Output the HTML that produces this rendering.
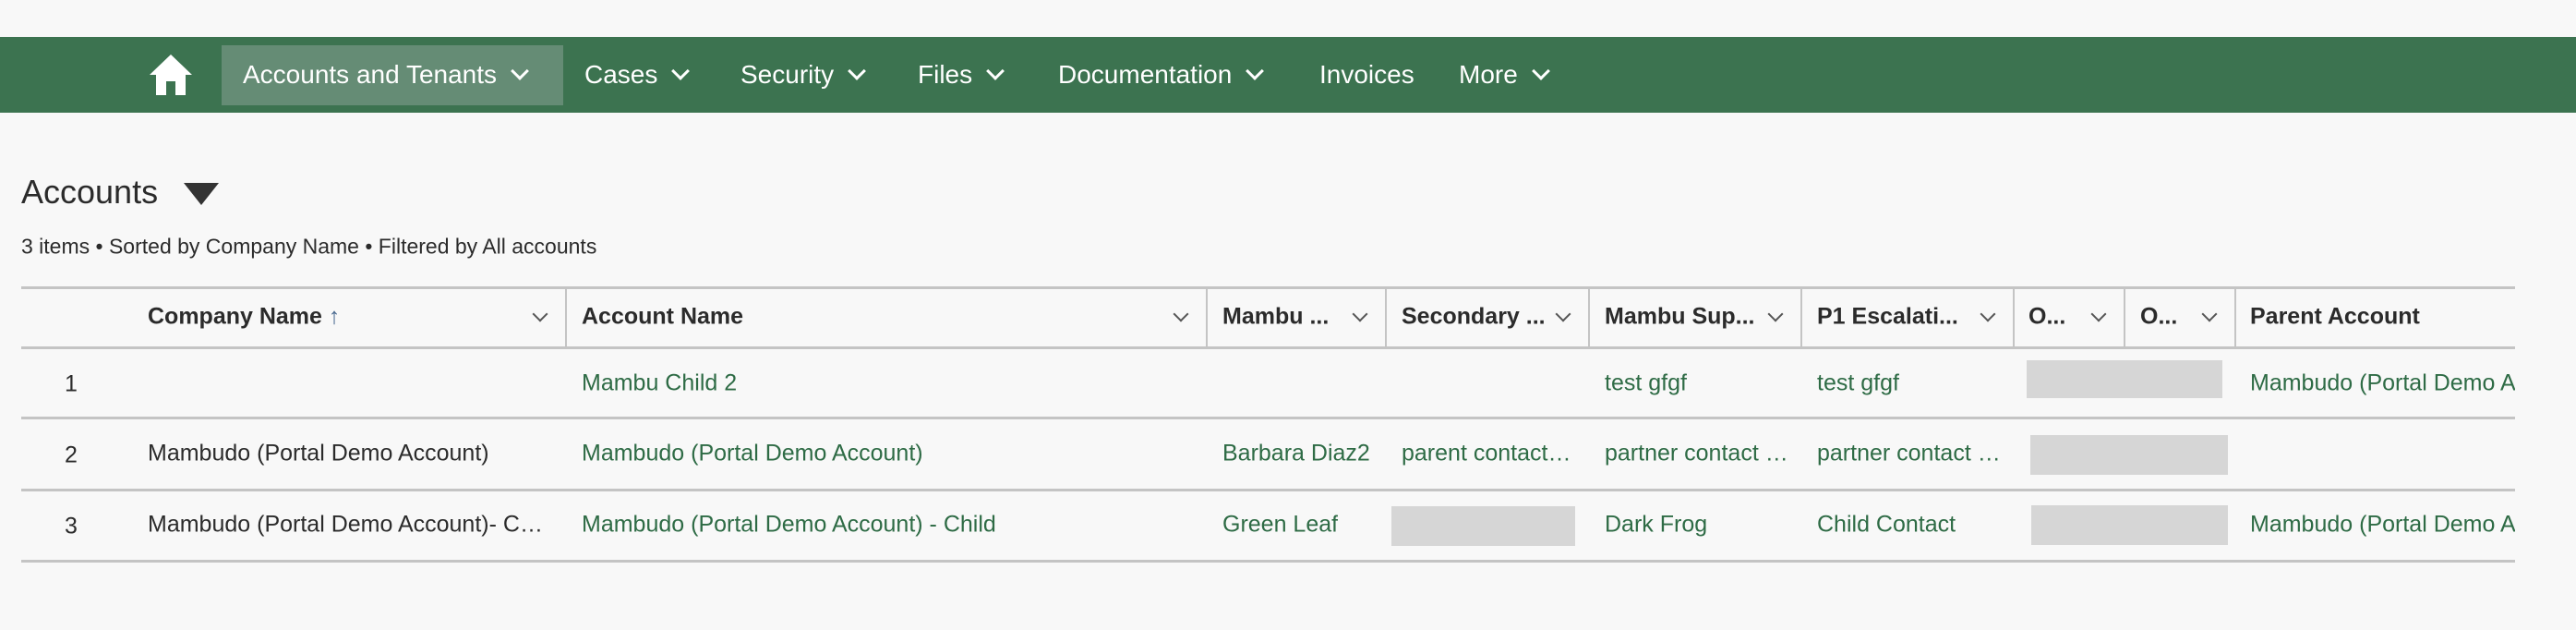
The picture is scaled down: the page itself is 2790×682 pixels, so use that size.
<!DOCTYPE html>
<html><head><meta charset="utf-8"><style>
*{margin:0;padding:0;box-sizing:border-box}
body{width:2790px;height:682px;background:#f8f8f8;font-family:"Liberation Sans",Arial,sans-serif;position:relative;overflow:hidden;color:#2b2b2b}
.a{position:absolute;white-space:nowrap}
.nav{position:absolute;left:0;top:40px;width:2790px;height:82px;background:#3c7350}
.act{position:absolute;left:240px;top:49px;width:370px;height:65px;background:#658c75}
.ni{position:absolute;top:81px;transform:translateY(-50%);color:#fff;font-size:28px;line-height:1}
.chev{display:inline-block;width:14px;height:14px;border-right:3px solid currentColor;border-bottom:3px solid currentColor;transform:rotate(45deg);margin-left:18px;position:relative;top:-6px}
.hl{position:absolute;left:23px;width:2701px;height:3px;background:#c4c4c4}
.vl{position:absolute;top:313px;width:2px;height:63px;background:#c4c4c4}
.h{font-weight:bold;font-size:25px;top:343px;transform:translateY(-50%)}
.c{font-size:25px;transform:translateY(-50%);overflow:hidden;text-overflow:ellipsis}
.g{color:#2e6b45}
.hc{position:absolute;top:334px;width:12px;height:12px;border-right:2.5px solid #555;border-bottom:2.5px solid #555;transform:rotate(45deg)}
.gr{position:absolute;background:#d6d6d6}
</style></head><body>
<div class="nav"></div>
<div class="act"></div>
<svg class="a" style="left:160px;top:57px" width="50" height="48" viewBox="0 0 50 48"><path d="M25 2 L48 24 H41 V46 H30 V31 H20 V46 H9 V24 H2 Z" fill="#fff"/></svg>
<div class="ni" style="left:263px">Accounts and Tenants<span class="chev"></span></div>
<div class="ni" style="left:633px">Cases<span class="chev"></span></div>
<div class="ni" style="left:802px">Security<span class="chev"></span></div>
<div class="ni" style="left:994px">Files<span class="chev"></span></div>
<div class="ni" style="left:1146px">Documentation<span class="chev"></span></div>
<div class="ni" style="left:1429px">Invoices</div>
<div class="ni" style="left:1580px">More<span class="chev"></span></div>

<div class="a" style="left:23px;top:208px;transform:translateY(-50%);font-size:36px;color:#2b2b2b">Accounts</div>
<svg class="a" style="left:199px;top:198px" width="38" height="24"><path d="M0 0 H38 L19 24 Z" fill="#333"/></svg>
<div class="a" style="left:23px;top:267px;transform:translateY(-50%);font-size:23px">3 items • Sorted by Company Name • Filtered by All accounts</div>

<div class="hl" style="top:310px"></div>
<div class="hl" style="top:375px"></div>
<div class="hl" style="top:451px"></div>
<div class="hl" style="top:529px"></div>
<div class="hl" style="top:606px"></div>
<div class="vl" style="left:612px"></div><div class="vl" style="left:1306px"></div><div class="vl" style="left:1500px"></div><div class="vl" style="left:1720px"></div><div class="vl" style="left:1950px"></div><div class="vl" style="left:2180px"></div><div class="vl" style="left:2300px"></div><div class="vl" style="left:2420px"></div>

<div class="a h" style="left:160px">Company Name <span style="color:#4a6a90">&#8593;</span></div>
<div class="a h" style="left:630px">Account Name</div>
<div class="a h" style="left:1324px">Mambu ...</div>
<div class="a h" style="left:1518px">Secondary ...</div>
<div class="a h" style="left:1738px">Mambu Sup...</div>
<div class="a h" style="left:1968px">P1 Escalati...</div>
<div class="a h" style="left:2197px">O...</div>
<div class="a h" style="left:2318px">O...</div>
<div class="a h" style="left:2437px">Parent Account</div>
<div class="hc" style="left:579px"></div><div class="hc" style="left:1273px"></div><div class="hc" style="left:1467px"></div><div class="hc" style="left:1687px"></div><div class="hc" style="left:1917px"></div><div class="hc" style="left:2147px"></div><div class="hc" style="left:2267px"></div><div class="hc" style="left:2387px"></div>

<div class="a c" style="left:70px;top:416px">1</div>
<div class="a c g" style="left:630px;top:415px">Mambu Child 2</div>
<div class="a c g" style="left:1738px;top:415px">test gfgf</div>
<div class="a c g" style="left:1968px;top:415px">test gfgf</div>
<div class="gr" style="left:2195px;top:390px;width:212px;height:41px"></div>
<div class="a c g" style="left:2437px;top:415px;width:287px;text-overflow:clip">Mambudo (Portal Demo Account)</div>

<div class="a c" style="left:70px;top:493px">2</div>
<div class="a c" style="left:160px;top:491px">Mambudo (Portal Demo Account)</div>
<div class="a c g" style="left:630px;top:491px">Mambudo (Portal Demo Account)</div>
<div class="a c g" style="left:1324px;top:491px">Barbara Diaz2</div>
<div class="a c g" style="left:1518px;top:491px;width:190px">parent contact name</div>
<div class="a c g" style="left:1738px;top:491px;width:200px">partner contact name</div>
<div class="a c g" style="left:1968px;top:491px;width:200px">partner contact name</div>
<div class="gr" style="left:2199px;top:471px;width:214px;height:43px"></div>

<div class="a c" style="left:70px;top:570px">3</div>
<div class="a c" style="left:160px;top:568px;width:440px">Mambudo (Portal Demo Account)- Child</div>
<div class="a c g" style="left:630px;top:568px">Mambudo (Portal Demo Account) - Child</div>
<div class="a c g" style="left:1324px;top:568px">Green Leaf</div>
<div class="gr" style="left:1507px;top:548px;width:199px;height:43px"></div>
<div class="a c g" style="left:1738px;top:568px">Dark Frog</div>
<div class="a c g" style="left:1968px;top:568px">Child Contact</div>
<div class="gr" style="left:2200px;top:547px;width:213px;height:43px"></div>
<div class="a c g" style="left:2437px;top:568px;width:287px;text-overflow:clip">Mambudo (Portal Demo Account)</div>
</body></html>
